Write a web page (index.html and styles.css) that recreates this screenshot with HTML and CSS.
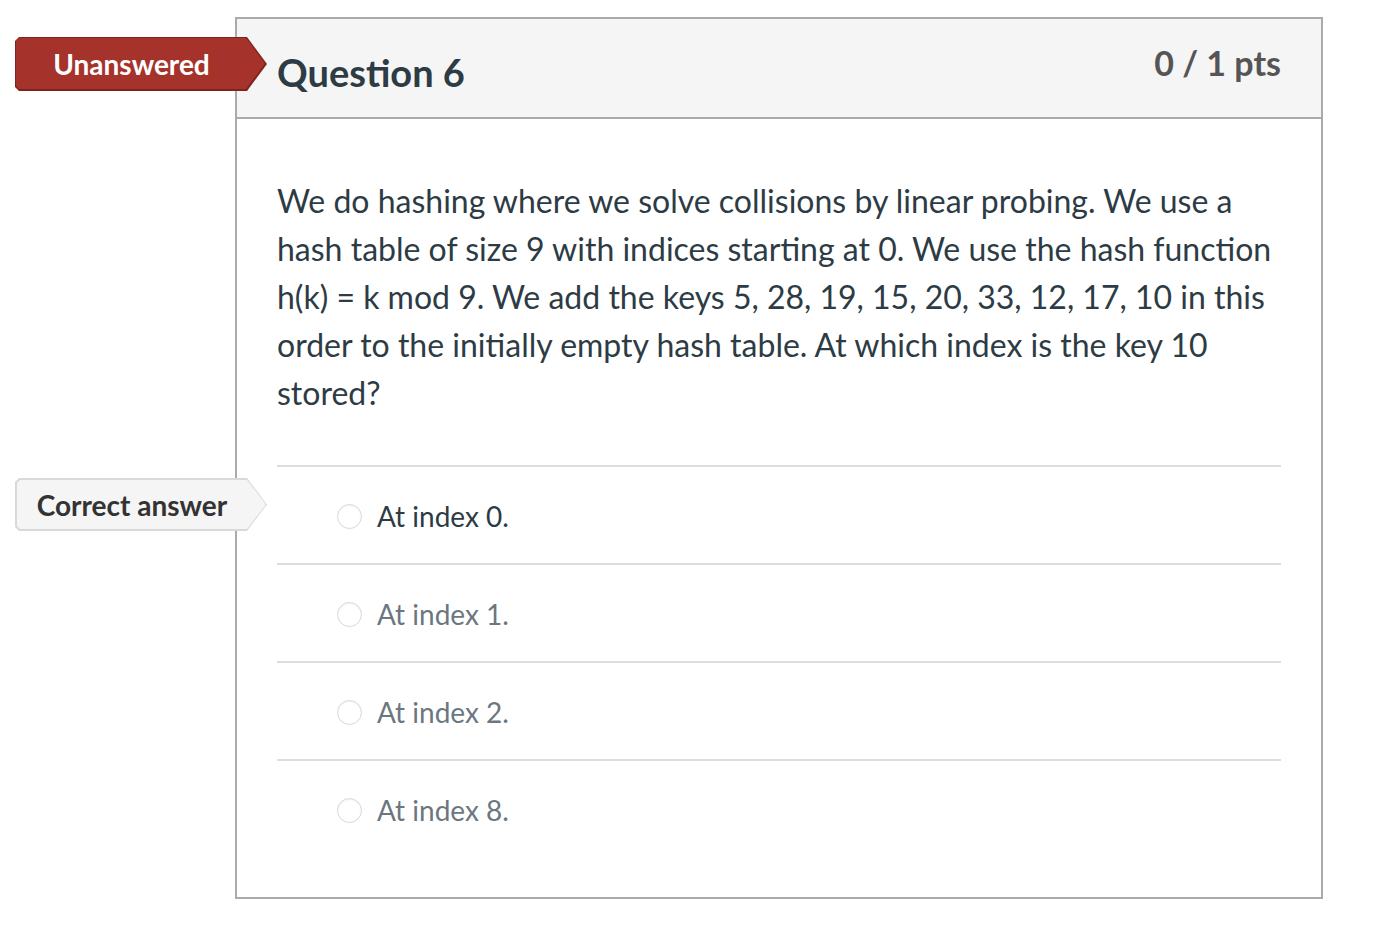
FILE: index.html
```html
<!DOCTYPE html>
<html>
<head>
<meta charset="utf-8">
<link rel="stylesheet" href="styles.css">
</head>
<body>
<div class="page">
  <div class="question">
    <div class="badge badge-red"><div class="badge-inner">Unanswered</div></div>
    <div class="header">
      <h2 class="title">Question 6</h2>
      <div class="pts">0 / 1 pts</div>
    </div>
    <div class="content">
      <p class="text">We do hashing where we solve collisions by linear probing. We use a hash table of size 9 with indices starting at 0. We use the hash function h(k) = k mod 9. We add the keys 5, 28, 19, 15, 20, 33, 12, 17, 10 in this order to the initially empty hash table. At which index is the key 10 stored?</p>
      <div class="answers">
        <div class="answer correct">
          <div class="badge badge-light"><div class="badge-inner">Correct answer</div></div>
          <span class="radio"></span><span class="label">At index 0.</span>
        </div>
        <div class="answer"><span class="radio"></span><span class="label">At index 1.</span></div>
        <div class="answer"><span class="radio"></span><span class="label">At index 2.</span></div>
        <div class="answer"><span class="radio"></span><span class="label">At index 8.</span></div>
      </div>
    </div>
  </div>
</div>
</body>
</html>
```

FILE: styles.css
```css
* { box-sizing: border-box; }
html, body { margin: 0; padding: 0; background: #fff; }
body { font-family: Lato, "Noto Sans", sans-serif; color: #2d3b45; }
.page { padding: 17px 0 0 235px; }
.question {
  position: relative;
  width: 1088px;
  border: 2px solid #aaaaaa;
}
.header {
  display: flex;
  justify-content: space-between;
  align-items: flex-start;
  background: #f5f5f5;
  border-bottom: 2px solid #aaaaaa;
  height: 100px;
  padding: 0 40px;
}
.title {
  margin: 0;
  font-size: 38px;
  font-weight: 700;
  color: #2d3b45;
  line-height: 40px;
  padding-top: 33px;
}
.pts {
  font-size: 34px;
  font-weight: 700;
  color: #555555;
  line-height: 40px;
  padding-top: 24px;
}
.content { padding: 58px 40px 40px; }
.text {
  margin: 0 0 48px;
  font-size: 32px;
  line-height: 48px;
}
.answer {
  position: relative;
  display: flex;
  align-items: center;
  height: 98px;
  border-top: 2px solid #dddddd;
  padding-left: 60px;
  padding-top: 2px;
  color: #6b7780;
}
.answer.correct { color: #2d3b45; }
.radio {
  width: 25px;
  height: 25px;
  border-radius: 50%;
  border: 1px solid #d8d8d8;
  background: #fff;
  box-shadow: inset 0 1px 2px rgba(0,0,0,0.06);
  margin-right: 15px;
}
.label { font-size: 28px; line-height: 40px; }
.badge {
  position: absolute;
  width: 252px;
  clip-path: polygon(0 4px, 4px 0, 232px 0, 252px 50%, 232px 100%, 4px 100%, 0 calc(100% - 4px));
}
.badge-inner {
  height: 100%;
  display: flex;
  align-items: center;
  justify-content: center;
  padding-right: 18px;
  font-weight: 700;
  font-size: 28px;
  clip-path: polygon(0 3px, 3px 0, 230px 0, 249px 50%, 230px 100%, 3px 100%, 0 calc(100% - 3px));
}
.badge-red {
  left: -222px;
  top: 18px;
  height: 54px;
  background: #7e231d;
  padding: 1px 2px 2px 1px;
}
.badge-red .badge-inner { background: #a5332c; color: #fff; }
.badge-light {
  left: -262px;
  top: 11px;
  height: 53px;
  background: #d9d9d9;
  padding: 2px;
}
.badge-light .badge-inner { background: #f5f5f5; color: #333333; }
```
